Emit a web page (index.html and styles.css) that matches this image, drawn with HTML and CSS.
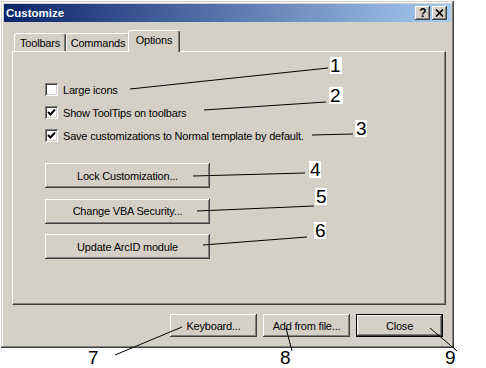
FILE: index.html
```html
<!DOCTYPE html>
<html lang="en">
<head>
  <meta charset="UTF-8" />
  <title>Customize</title>
  <link rel="stylesheet" href="styles.css">
</head>
<body>
  <div class="window">
    <div class="titlebar">
      <span class="title">Customize</span>
      <div class="caption-btns">
        <span class="cap cap-help">?</span>
        <span class="cap">
          <svg width="9" height="8" viewBox="0 0 9 8"><path d="M1 0.5 L8 7.5 M8 0.5 L1 7.5" stroke="#000" stroke-width="1.6"/></svg>
        </span>
      </div>
    </div>

    <div class="content">
      <div class="tabs">
        <div class="tab tab-toolbars">Toolbars</div>
        <div class="tab tab-commands">Commands</div>
        <div class="tab tab-options active">Options</div>
      </div>

      <div class="panel">
        <div class="checks">
          <label class="check"><span class="box"></span>Large icons</label>
          <label class="check"><span class="box checked"><svg width="9" height="9" viewBox="0 0 9 9"><path d="M1 4 L3.5 6.5 L8 1.5" fill="none" stroke="#000" stroke-width="2"/></svg></span>Show ToolTips on toolbars</label>
          <label class="check"><span class="box checked"><svg width="9" height="9" viewBox="0 0 9 9"><path d="M1 4 L3.5 6.5 L8 1.5" fill="none" stroke="#000" stroke-width="2"/></svg></span>Save customizations to Normal template by default.</label>
        </div>

        <div class="actions">
          <button class="btn btn-wide">Lock Customization...</button>
          <button class="btn btn-wide">Change VBA Security...</button>
          <button class="btn btn-wide">Update ArcID module</button>
        </div>
      </div>

      <div class="footer">
        <button class="btn">Keyboard...</button>
        <button class="btn">Add from file...</button>
        <button class="btn btn-default">Close</button>
      </div>
    </div>
  </div>

  <!-- callout lines and numbers drawn over the screenshot -->
  <svg class="callouts" width="486" height="368" viewBox="0 0 486 368">
    <g stroke="#000" stroke-width="1" fill="none">
      <path d="M130 89 L328 68" />
      <path d="M204 110 L326 102" />
      <path d="M312 135 L353 134" />
      <path d="M193 176 L305 173" />
      <path d="M197 211 L314 206" />
      <path d="M203 245 L307 237" />
      <path d="M115 355 L182 327" />
      <path d="M286 328 L292 351" />
      <path d="M430 328 L457 351" />
    </g>
    <g fill="#fff">
      <rect x="330" y="57" width="12" height="17" />
      <rect x="329" y="87" width="14" height="17" />
      <rect x="355" y="120" width="12" height="17" />
      <rect x="309" y="161" width="12" height="17" />
      <rect x="315" y="188" width="12" height="17" />
      <rect x="314" y="222" width="12" height="17" />
    </g>
    <g class="num">
      <text x="330" y="72">1</text>
      <text x="330" y="102">2</text>
      <text x="356" y="135">3</text>
      <text x="310" y="176">4</text>
      <text x="316" y="203">5</text>
      <text x="315" y="237">6</text>
      <text x="88" y="364">7</text>
      <text x="280" y="364">8</text>
      <text x="445" y="364">9</text>
    </g>
  </svg>
</body>
</html>
```

FILE: styles.css
```css
body {
  margin: 0;
  width: 486px;
  height: 368px;
  overflow: hidden;
  position: relative;
  background: #fff;
  font-family: "Liberation Sans", Arial, sans-serif;
  font-size: 11px;
  letter-spacing: -0.2px;
  color: #000;
}
.window {
  margin: 1px 0 0 1px;
  width: 453px;
  height: 347px;
  box-sizing: border-box;
  padding: 3px;
  background: #d4d0c8;
  box-shadow: inset -1px -1px #404040, inset 1px 1px #d4d0c8,
              inset -2px -2px #808080, inset 2px 2px #fff;
}
.titlebar {
  height: 18px;
  display: flex;
  align-items: center;
  justify-content: space-between;
  padding: 0 4px 0 2px;
  background: linear-gradient(to right, #0a246a, #a6caf0);
}
.title {
  color: #fff;
  font-weight: bold;
  font-size: 11.5px;
  letter-spacing: 0;
}
.caption-btns {
  display: flex;
  gap: 2px;
}
.cap {
  width: 15px;
  height: 14px;
  box-sizing: border-box;
  display: flex;
  align-items: center;
  justify-content: center;
  background: #d4d0c8;
  box-shadow: inset -1px -1px #404040, inset 1px 1px #fff,
              inset -2px -2px #808080;
}
.cap-help {
  font-weight: bold;
  font-size: 12px;
  letter-spacing: 0;
  padding-left: 1px;
}
.content {
  padding: 0 5px 0 8px;
}
.tabs {
  height: 21px;
  margin-top: 8px;
  padding-left: 2px;
  display: flex;
  align-items: flex-end;
}
.tab {
  height: 18px;
  box-sizing: border-box;
  padding-top: 3px;
  text-align: center;
  background: #d4d0c8;
  border-top: 1px solid #fff;
  border-left: 1px solid #fff;
  border-right: 1px solid #404040;
  border-radius: 3px 3px 0 0;
  box-shadow: inset -1px 0 #808080;
}
.tab-toolbars { width: 52px; }
.tab-commands { width: 64px; }
.tab-options { width: 52px; }
.tab.active {
  height: 22px;
  margin: 0 -2px -1px -2px;
  position: relative;
  z-index: 1;
}
.panel {
  height: 254px;
  box-sizing: border-box;
  padding: 31px 0 0 32px;
  border-top: 1px solid #fff;
  border-left: 1px solid #fff;
  border-right: 1px solid #404040;
  border-bottom: 1px solid #404040;
  box-shadow: inset -1px -1px #808080;
}
.checks {
  display: flex;
  flex-direction: column;
  gap: 10px;
}
.check {
  display: flex;
  align-items: center;
  gap: 5px;
  height: 13px;
}
.box {
  width: 13px;
  height: 13px;
  box-sizing: border-box;
  display: flex;
  align-items: center;
  justify-content: center;
  background: #fff;
  box-shadow: inset 1px 1px #808080, inset -1px -1px #fff,
              inset 2px 2px #404040, inset -2px -2px #d4d0c8;
}
.actions {
  margin-top: 21px;
  display: flex;
  flex-direction: column;
  align-items: flex-start;
  gap: 10.5px;
}
.btn {
  font: inherit;
  letter-spacing: inherit;
  color: #000;
  width: 87px;
  height: 23px;
  padding: 0;
  border: none;
  background: #d4d0c8;
  box-shadow: inset -1px -1px #404040, inset 1px 1px #fff,
              inset -2px -2px #808080, inset 2px 2px #d4d0c8;
}
.btn-wide {
  width: 165px;
  height: 25px;
}
.btn-default {
  border: 1px solid #000;
}
.footer {
  margin-top: 9px;
  padding-right: 3px;
  display: flex;
  justify-content: flex-end;
  gap: 6px;
}
.callouts {
  position: absolute;
  left: 0;
  top: 0;
  pointer-events: none;
}
.num {
  font-family: "Liberation Sans", Arial, sans-serif;
  font-size: 19px;
  letter-spacing: 0;
  fill: #000;
}
```
